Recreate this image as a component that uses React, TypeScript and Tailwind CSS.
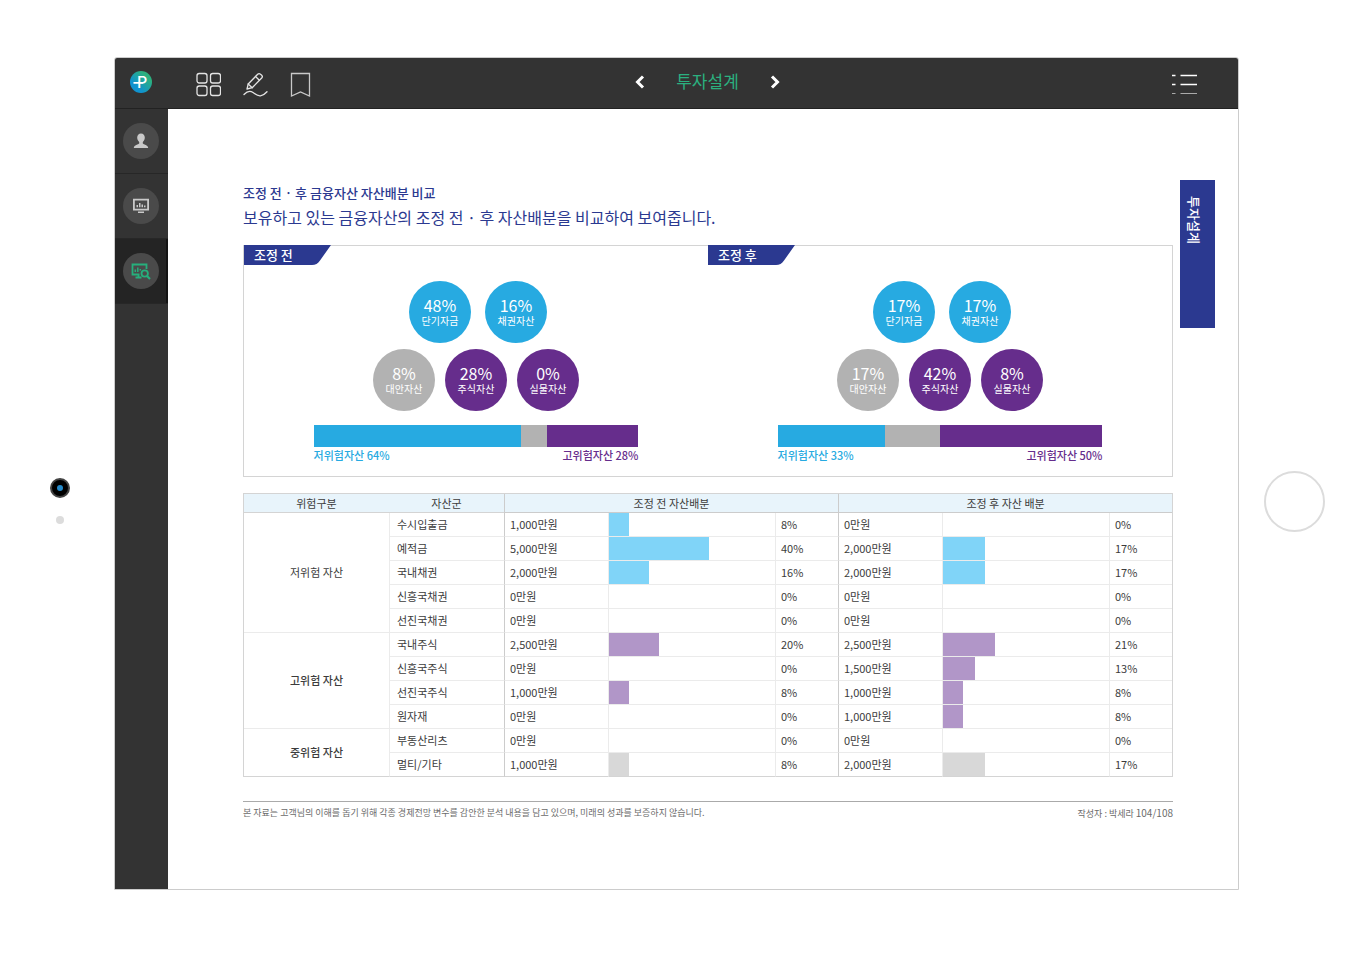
import { clsx } from "clsx";

type Tone = "low" | "mid" | "high";

const solid: Record<Tone, string> = {
  low: "bg-[#27aae1]",
  mid: "bg-[#b2b2b2]",
  high: "bg-[#662d8c]",
};

const soft: Record<Tone, string> = {
  low: "bg-[#80d4f8]",
  mid: "bg-[#d8d8d8]",
  high: "bg-[#b196c8]",
};

const portfolios = [
  {
    title: "조정 전",
    top: [
      { value: 48, label: "단기자금", tone: "low" as Tone },
      { value: 16, label: "채권자산", tone: "low" as Tone },
    ],
    bottom: [
      { value: 8, label: "대안자산", tone: "mid" as Tone },
      { value: 28, label: "주식자산", tone: "high" as Tone },
      { value: 0, label: "실물자산", tone: "high" as Tone },
    ],
    low: 64,
    mid: 8,
    high: 28,
  },
  {
    title: "조정 후",
    top: [
      { value: 17, label: "단기자금", tone: "low" as Tone },
      { value: 17, label: "채권자산", tone: "low" as Tone },
    ],
    bottom: [
      { value: 17, label: "대안자산", tone: "mid" as Tone },
      { value: 42, label: "주식자산", tone: "high" as Tone },
      { value: 8, label: "실물자산", tone: "high" as Tone },
    ],
    low: 33,
    mid: 17,
    high: 50,
  },
];

const groups = [
  {
    name: "저위험 자산",
    tone: "low" as Tone,
    rows: [
      { name: "수시입출금", before: ["1,000", 8], after: ["0", 0] },
      { name: "예적금", before: ["5,000", 40], after: ["2,000", 17] },
      { name: "국내채권", before: ["2,000", 16], after: ["2,000", 17] },
      { name: "신흥국채권", before: ["0", 0], after: ["0", 0] },
      { name: "선진국채권", before: ["0", 0], after: ["0", 0] },
    ],
  },
  {
    name: "고위험 자산",
    tone: "high" as Tone,
    rows: [
      { name: "국내주식", before: ["2,500", 20], after: ["2,500", 21] },
      { name: "신흥국주식", before: ["0", 0], after: ["1,500", 13] },
      { name: "선진국주식", before: ["1,000", 8], after: ["1,000", 8] },
      { name: "원자재", before: ["0", 0], after: ["1,000", 8] },
    ],
  },
  {
    name: "중위험 자산",
    tone: "mid" as Tone,
    rows: [
      { name: "부동산리츠", before: ["0", 0], after: ["0", 0] },
      { name: "멀티/기타", before: ["1,000", 8], after: ["2,000", 17] },
    ],
  },
];

function Logo() {
  return (
    <svg width="22" height="22" viewBox="0 0 22 22" aria-hidden="true">
      <defs>
        <linearGradient id="logo" x1="0" y1="1" x2="1" y2="0">
          <stop offset="0.3" stopColor="#1093cf" />
          <stop offset="0.75" stopColor="#2bb07f" />
        </linearGradient>
      </defs>
      <circle cx="11" cy="11" r="11" fill="url(#logo)" />
      <text
        x="7"
        y="17"
        fill="#fff"
        className="font-['Inter',sans-serif] text-[16px] font-medium"
      >
        P
      </text>
      <path d="M3.500 11.800H13" stroke="#fff" strokeWidth="1.700" />
    </svg>
  );
}

function Header() {
  return (
    <header className="flex h-[51px] items-start border-b border-[#222] bg-[#333]">
      <a
        href="#home"
        aria-label="홈"
        className="flex w-[53px] shrink-0 justify-center pt-[13px] pr-[2px]"
      >
        <Logo />
      </a>
      <div className="grid flex-1 grid-cols-[1fr_auto_1fr] pr-[19px] pl-7">
        <div className="flex gap-[22px] pt-[14px]">
          <button type="button" aria-label="메뉴">
            <svg
              width="25"
              height="25"
              viewBox="0 0 25 25"
              fill="none"
              stroke="#e4e4e4"
              strokeWidth="1.3"
            >
              <rect x="1" y="1.500" width="10" height="9.500" rx="2.200" />
              <rect x="14.500" y="1.500" width="10" height="9.500" rx="2.200" />
              <rect x="1" y="14" width="10" height="9.500" rx="2.200" />
              <rect x="14.500" y="14" width="10" height="9.500" rx="2.200" />
            </svg>
          </button>
          <button type="button" aria-label="필기">
            <svg
              width="25"
              height="25"
              viewBox="0 0 25 25"
              fill="none"
              stroke="#e4e4e4"
              strokeWidth="1.3"
              strokeLinecap="round"
              strokeLinejoin="round"
            >
              <path d="M4 17L5.200 12L14.700 2.200Q16 1 17.500 2.200L18.700 3.200Q20 4.500 18.700 6L9.200 15.700Z" />
              <path d="M12.500 4.500L16.400 8.300M5.200 12L9.200 15.700" />
              <path d="M1 22.500C4 19.300 7 18.300 10 20.500C13 22.700 14.500 24.200 17.500 23.800C20.500 23.400 22.500 21.500 24 19.800" />
            </svg>
          </button>
          <button type="button" aria-label="북마크">
            <svg
              width="21"
              height="25"
              viewBox="0 0 21 25"
              fill="none"
              stroke="#c9c9c9"
              strokeWidth="1.3"
            >
              <path d="M1.500 1.500H19.500V24L10.500 20L1.500 24Z" />
            </svg>
          </button>
        </div>
        <nav className="flex items-center gap-[31px] pt-[9px]">
          <button type="button" aria-label="이전">
            <svg width="10" height="14" viewBox="0 0 10 14" fill="none">
              <path d="M8 1.500L2.500 7L8 12.500" stroke="#fff" strokeWidth="3" />
            </svg>
          </button>
          <h1 className="pb-[2px] text-[17px] leading-6 text-[#2bb07f]">
            투자설계
          </h1>
          <button type="button" aria-label="다음">
            <svg width="10" height="14" viewBox="0 0 10 14" fill="none">
              <path d="M2 1.500L7.500 7L2 12.500" stroke="#fff" strokeWidth="3" />
            </svg>
          </button>
        </nav>
        <div className="flex justify-end pt-[15px] pr-[22px]">
          <button type="button" aria-label="목록">
            <svg width="25" height="22" viewBox="0 0 25 22" fill="none">
              <path
                d="M0 1.500H3.500M8.500 1.500H25M0 10.500H3.500M8.500 10.500H25"
                stroke="#fff"
                strokeWidth="1.300"
              />
              <path d="M0 19.500H3.500M8.500 19.500H25" stroke="#aaa" />
            </svg>
          </button>
        </div>
      </div>
    </header>
  );
}

const sideItems = [
  {
    label: "고객",
    active: false,
    icon: (
      <svg width="16" height="16" viewBox="0 0 16 16" fill="#c9c9c9">
        <path d="M8 .5C5.600 .5 4.200 2.200 4.200 4.500C4.200 6.500 5 8 6.200 8.900V10.500C5.500 11.500 1 11.800 .8 15H15.200C15 11.800 10.500 11.500 9.800 10.500V8.900C11 8 11.800 6.500 11.800 4.500C11.800 2.200 10.400 .5 8 .5Z" />
      </svg>
    ),
  },
  {
    label: "리포트",
    active: false,
    icon: (
      <svg width="16" height="16" viewBox="0 0 16 16" fill="#c9c9c9">
        <path fillRule="evenodd" d="M0 .8H16V12.400H0ZM1.800 2.500V10.700H14.200V2.500Z" />
        <path d="M3.500 7H5V9.300H3.500ZM6 5H7.500V9.300H6ZM8.500 6.500H10V9.300H8.500ZM11 7.500H12.500V9.300H11ZM5 13.600H11V15H5Z" />
      </svg>
    ),
  },
  {
    label: "투자설계",
    active: true,
    icon: (
      <svg
        width="20"
        height="17"
        viewBox="0 0 20 17"
        fill="none"
        stroke="#26b07c"
        strokeWidth="1.800"
      >
        <path d="M15.500 6V1.500H1.500V11.500H8.500M4.500 14.500H10.500M7.500 11.500V14.500" />
        <path d="M4.300 9V6.500M6.800 9V4.500M9.300 7.500V6" strokeWidth="1.500" />
        <circle cx="13.700" cy="10.500" r="3.200" />
        <path d="M16 13L19 16" strokeWidth="2.200" />
      </svg>
    ),
  },
];

function Sidebar() {
  return (
    <aside className="w-[53px] shrink-0 bg-[#333]">
      {sideItems.map((item) => (
        <button
          key={item.label}
          type="button"
          aria-label={item.label}
          className={clsx(
            "flex h-[65px] w-full items-center justify-center border-b border-[#272727] pr-[2px]",
            item.active && "bg-[#242424] shadow-[inset_-2px_0_0_#141414]",
          )}
        >
          <span className="flex h-9 w-9 items-center justify-center rounded-full bg-[#4a4a4a]">
            {item.icon}
          </span>
        </button>
      ))}
    </aside>
  );
}

function Bubble({
  value,
  label,
  tone,
}: {
  value: number;
  label: string;
  tone: Tone;
}) {
  return (
    <div
      className={clsx(
        "flex h-[62px] w-[62px] flex-col items-center justify-center rounded-full text-white",
        solid[tone],
      )}
    >
      <span className="text-base leading-[18px]">{value}%</span>
      <span className="text-[10px] leading-[14px]">{label}</span>
    </div>
  );
}

function Portfolio({ data }: { data: (typeof portfolios)[number] }) {
  return (
    <section>
      <div className="relative -mt-px h-5 w-[87px]">
        <svg
          className="absolute inset-0"
          width="87"
          height="20"
          viewBox="0 0 87 20"
          fill="#2b3990"
        >
          <path d="M0 0H87L76 15.500Q73 20 68 20H0Z" />
        </svg>
        <h3 className="relative pl-[10px] text-[13px] leading-5 font-medium text-white">
          {data.title}
        </h3>
      </div>
      <div className="mt-4 flex justify-center gap-[14px] pl-1">
        {data.top.map((item) => (
          <Bubble key={item.label} {...item} />
        ))}
      </div>
      <div className="mt-[6px] flex justify-center gap-[10px]">
        {data.bottom.map((item) => (
          <Bubble key={item.label} {...item} />
        ))}
      </div>
      <div className="mx-auto mt-[14px] w-[70%]">
        <div className="flex h-[22px]">
          <div className={solid.low} style={{ width: `${data.low}%` }} />
          <div className={solid.mid} style={{ width: `${data.mid}%` }} />
          <div className={solid.high} style={{ width: `${data.high}%` }} />
        </div>
        <div className="flex justify-between text-[11px] leading-4 font-medium">
          <span className="text-[#27aae1]">저위험자산 {data.low}%</span>
          <span className="text-[#662d8c]">고위험자산 {data.high}%</span>
        </div>
      </div>
    </section>
  );
}

function Allocation({ data, tone }: { data: (string | number)[]; tone: Tone }) {
  const percent = Number(data[1]);
  return (
    <>
      <td className="border-b border-l border-b-[#ebebeb] border-l-[#ccc] pb-[2px] pl-[5px]">
        {data[0]}만원
      </td>
      <td className="border-b border-l border-[#ebebeb]">
        {/* 100% of the cell stands for roughly 67% of the assets */}
        <div
          className={clsx("h-[23px]", soft[tone])}
          style={{ width: `${percent * 1.5}%` }}
        />
      </td>
      <td className="border-b border-l border-[#ebebeb] pb-[2px] pl-[5px]">
        {percent}%
      </td>
    </>
  );
}

function AssetTable() {
  return (
    <table className="mt-4 w-full table-fixed border-separate border-spacing-0 border border-b-0 border-[#d4d4d4] text-[11px] leading-4 text-[#3c3c3c]">
      <colgroup>
        <col className="w-[145px]" />
        <col className="w-[115px]" />
        <col className="w-[104px]" />
        <col className="w-[167px]" />
        <col className="w-[63px]" />
        <col className="w-[104px]" />
        <col className="w-[167px]" />
        <col className="w-[63px]" />
      </colgroup>
      <thead>
        <tr className="h-[19px] bg-[#e8f4fb]">
          <th className="border-b border-[#d4d4d4] font-normal">위험구분</th>
          <th className="border-b border-[#d4d4d4] font-normal">자산군</th>
          <th
            colSpan={3}
            className="border-b border-l border-[#ccc] font-normal"
          >
            조정 전 자산배분
          </th>
          <th
            colSpan={3}
            className="border-b border-l border-[#ccc] font-normal"
          >
            조정 후 자산 배분
          </th>
        </tr>
      </thead>
      <tbody className="[&>tr:last-child>td]:border-b-[#d4d4d4]">
        {groups.map((group) =>
          group.rows.map((row, index) => (
            <tr key={row.name} className="h-6">
              {index === 0 && (
                <th
                  rowSpan={group.rows.length}
                  className={clsx(
                    "border-b pb-[2px]",
                    group.tone === "low" ? "font-normal" : "font-medium",
                    group.tone === "mid"
                      ? "border-[#d4d4d4]"
                      : "border-[#ebebeb]",
                  )}
                >
                  {group.name}
                </th>
              )}
              <td className="border-b border-l border-[#ebebeb] pb-[2px] pl-[7px]">
                {row.name}
              </td>
              <Allocation data={row.before} tone={group.tone} />
              <Allocation data={row.after} tone={group.tone} />
            </tr>
          )),
        )}
      </tbody>
    </table>
  );
}

export default function App() {
  return (
    <div className="flex min-h-screen bg-white pt-[57px] pb-[72px] font-['Noto_Sans_CJK_KR','Noto_Sans',sans-serif]">
      {/* front camera and sensor */}
      <div className="flex w-[114px] shrink-0 flex-col items-center justify-center gap-[18px] pt-[55px] pl-[6px]">
        <div className="flex h-5 w-5 items-center justify-center rounded-full border-2 border-[#444] bg-black">
          <div className="h-[6px] w-[6px] rounded-full bg-[#2489c9]" />
        </div>
        <div className="h-2 w-2 rounded-full bg-[#dcdcdc]" />
      </div>

      <div className="flex min-w-0 flex-1 flex-col overflow-hidden rounded-t-[3px] border border-[#ccc]">
        <Header />
        <div className="flex flex-1">
          <Sidebar />
          <main className="flex min-w-0 flex-1 items-start gap-[7px] pr-[23px] pl-[75px]">
            <div className="min-w-0 flex-1 pt-[74px]">
              <h2 className="text-[13px] leading-5 font-medium text-[#2b3990]">
                조정 전 · 후 금융자산 자산배분 비교
              </h2>
              <p className="text-base leading-7 text-[#2b3990]">
                보유하고 있는 금융자산의 조정 전 · 후 자산배분을 비교하여
                보여줍니다.
              </p>
              <div className="mt-[14px] grid grid-cols-2 border border-[#d4d4d4] pb-[13px]">
                {portfolios.map((item) => (
                  <Portfolio key={item.title} data={item} />
                ))}
              </div>
              <AssetTable />
              <footer className="mt-6 flex justify-between border-t border-[#aaa] pt-[2px] text-[9px] leading-[18px] text-[#6b6b6b]">
                <p>
                  본 자료는 고객님의 이해를 돕기 위해 각종 경제전망 변수를
                  감안한 분석 내용을 담고 있으며, 미래의 성과를 보증하지
                  않습니다.
                </p>
                <p>
                  작성자 : 박세라 <span className="text-[10px]">104/108</span>
                </p>
              </footer>
            </div>
            <a
              href="#plan"
              className="mt-[71px] h-[148px] w-[35px] shrink-0 bg-[#2b3990] pt-4 pr-2 text-[13px] leading-[26px] font-medium text-white [text-orientation:sideways] [writing-mode:vertical-rl]"
            >
              투자설계
            </a>
          </main>
        </div>
      </div>

      <div className="flex w-[113px] shrink-0 items-center justify-center pt-[55px] pr-[2px]">
        <button
          type="button"
          aria-label="홈 버튼"
          className="h-[61px] w-[61px] rounded-full border-2 border-[#dcdcdc]"
        />
      </div>
    </div>
  );
}
